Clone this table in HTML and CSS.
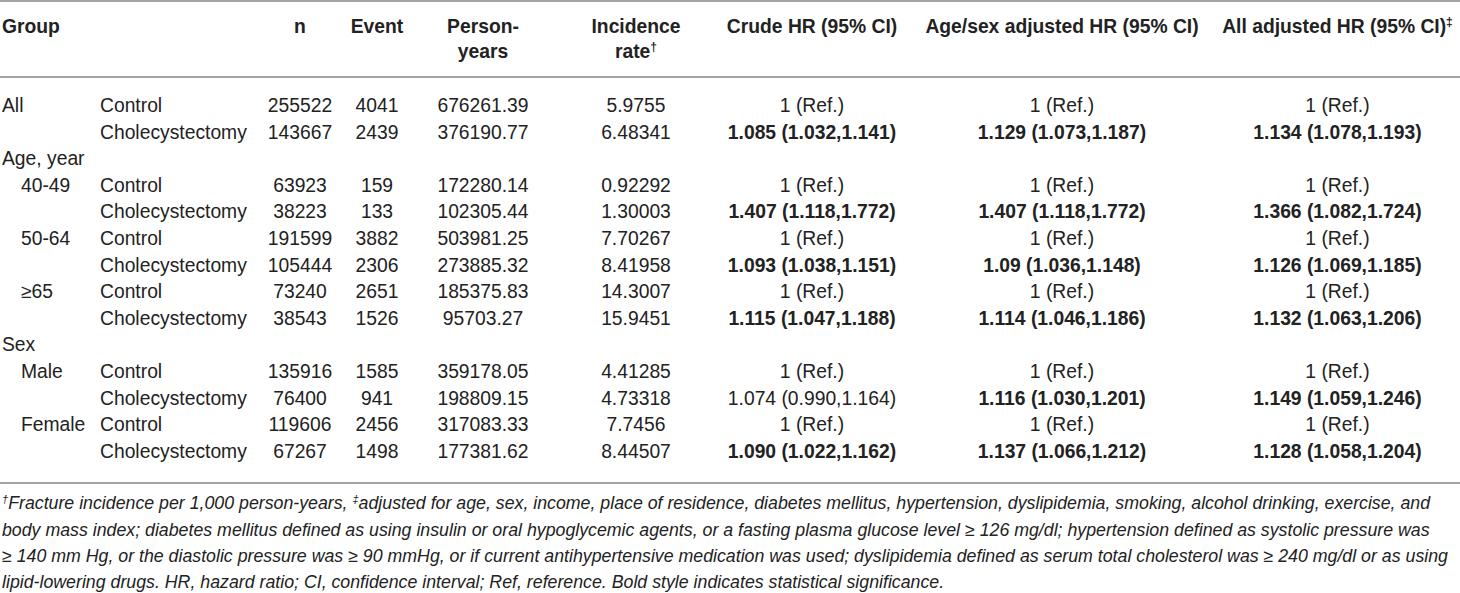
FILE: index.html
```html
<!DOCTYPE html>
<html lang="en">
<head>
    <meta charset="UTF-8">
    <title>Fracture risk after cholecystectomy</title>
    <link rel="stylesheet" href="styles.css">
</head>
<body>
    <table class="hr-table">
        <colgroup>
            <col class="c-group">
            <col class="c-sub">
            <col class="c-n">
            <col class="c-event">
            <col class="c-py">
            <col class="c-inc">
            <col class="c-crude">
            <col class="c-agesex">
            <col class="c-all">
        </colgroup>
        <thead>
            <tr>
                <th class="left">Group</th>
                <th></th>
                <th>n</th>
                <th>Event</th>
                <th>Person-<br>years</th>
                <th>Incidence<br>rate<sup>&dagger;</sup></th>
                <th>Crude HR (95% CI)</th>
                <th>Age/sex adjusted HR (95% CI)</th>
                <th>All adjusted HR (95% CI)<sup>&Dagger;</sup></th>
            </tr>
        </thead>
        <tbody>
            <tr class="first">
                <td class="left">All</td><td class="left">Control</td>
                <td>255522</td><td>4041</td><td>676261.39</td><td>5.9755</td>
                <td>1 (Ref.)</td><td>1 (Ref.)</td><td>1 (Ref.)</td>
            </tr>
            <tr>
                <td></td><td class="left">Cholecystectomy</td>
                <td>143667</td><td>2439</td><td>376190.77</td><td>6.48341</td>
                <td><b>1.085 (1.032,1.141)</b></td><td><b>1.129 (1.073,1.187)</b></td><td><b>1.134 (1.078,1.193)</b></td>
            </tr>
            <tr>
                <td class="left" colspan="2">Age, year</td>
                <td></td><td></td><td></td><td></td><td></td><td></td><td></td>
            </tr>
            <tr>
                <td class="left sub">40-49</td><td class="left">Control</td>
                <td>63923</td><td>159</td><td>172280.14</td><td>0.92292</td>
                <td>1 (Ref.)</td><td>1 (Ref.)</td><td>1 (Ref.)</td>
            </tr>
            <tr>
                <td></td><td class="left">Cholecystectomy</td>
                <td>38223</td><td>133</td><td>102305.44</td><td>1.30003</td>
                <td><b>1.407 (1.118,1.772)</b></td><td><b>1.407 (1.118,1.772)</b></td><td><b>1.366 (1.082,1.724)</b></td>
            </tr>
            <tr>
                <td class="left sub">50-64</td><td class="left">Control</td>
                <td>191599</td><td>3882</td><td>503981.25</td><td>7.70267</td>
                <td>1 (Ref.)</td><td>1 (Ref.)</td><td>1 (Ref.)</td>
            </tr>
            <tr>
                <td></td><td class="left">Cholecystectomy</td>
                <td>105444</td><td>2306</td><td>273885.32</td><td>8.41958</td>
                <td><b>1.093 (1.038,1.151)</b></td><td><b>1.09 (1.036,1.148)</b></td><td><b>1.126 (1.069,1.185)</b></td>
            </tr>
            <tr>
                <td class="left sub">&ge;65</td><td class="left">Control</td>
                <td>73240</td><td>2651</td><td>185375.83</td><td>14.3007</td>
                <td>1 (Ref.)</td><td>1 (Ref.)</td><td>1 (Ref.)</td>
            </tr>
            <tr>
                <td></td><td class="left">Cholecystectomy</td>
                <td>38543</td><td>1526</td><td>95703.27</td><td>15.9451</td>
                <td><b>1.115 (1.047,1.188)</b></td><td><b>1.114 (1.046,1.186)</b></td><td><b>1.132 (1.063,1.206)</b></td>
            </tr>
            <tr>
                <td class="left" colspan="2">Sex</td>
                <td></td><td></td><td></td><td></td><td></td><td></td><td></td>
            </tr>
            <tr>
                <td class="left sub">Male</td><td class="left">Control</td>
                <td>135916</td><td>1585</td><td>359178.05</td><td>4.41285</td>
                <td>1 (Ref.)</td><td>1 (Ref.)</td><td>1 (Ref.)</td>
            </tr>
            <tr>
                <td></td><td class="left">Cholecystectomy</td>
                <td>76400</td><td>941</td><td>198809.15</td><td>4.73318</td>
                <td>1.074 (0.990,1.164)</td><td><b>1.116 (1.030,1.201)</b></td><td><b>1.149 (1.059,1.246)</b></td>
            </tr>
            <tr>
                <td class="left sub">Female</td><td class="left">Control</td>
                <td>119606</td><td>2456</td><td>317083.33</td><td>7.7456</td>
                <td>1 (Ref.)</td><td>1 (Ref.)</td><td>1 (Ref.)</td>
            </tr>
            <tr class="last">
                <td></td><td class="left">Cholecystectomy</td>
                <td>67267</td><td>1498</td><td>177381.62</td><td>8.44507</td>
                <td><b>1.090 (1.022,1.162)</b></td><td><b>1.137 (1.066,1.212)</b></td><td><b>1.128 (1.058,1.204)</b></td>
            </tr>
        </tbody>
    </table>

    <p class="footnote">
        <sup>&dagger;</sup>Fracture incidence per 1,000 person-years, <sup>&Dagger;</sup>adjusted for age, sex, income, place of residence, diabetes mellitus, hypertension, dyslipidemia, smoking, alcohol drinking, exercise, and body mass index; diabetes mellitus defined as using insulin or oral hypoglycemic agents, or a fasting plasma glucose level &ge;&nbsp;126 mg/dl; hypertension defined as systolic pressure was &ge;&nbsp;140 mm Hg, or the diastolic pressure was &ge;&nbsp;90 mmHg, or if current antihypertensive medication was used; dyslipidemia defined as serum total cholesterol was &ge;&nbsp;240 mg/dl or as using lipid-lowering drugs. HR, hazard ratio; CI, confidence interval; Ref, reference. Bold style indicates statistical significance.
    </p>
</body>
</html>
```

FILE: styles.css
```css
/* Page */
body {
    margin: 0;
    background: #ffffff;
    color: #222222;
    font-family: "Liberation Sans", Arial, sans-serif;
}

/* Table */
.hr-table {
    width: 1460px;
    table-layout: fixed;
    border-collapse: separate;
    border-spacing: 0;
    font-size: 19.3px;
}

.c-group { width: 98px; }
.c-sub { width: 157px; }
.c-n { width: 90px; }
.c-event { width: 64px; }
.c-py { width: 148px; }
.c-inc { width: 158px; }
.c-crude { width: 194px; }
.c-agesex { width: 306px; }
.c-all { width: 245px; }

.hr-table th,
.hr-table td {
    padding: 0;
    text-align: center;
    white-space: nowrap;
}

.hr-table th {
    font-weight: bold;
    line-height: 25px;
    vertical-align: top;
    padding-top: 12px;
    padding-bottom: 12px;
    border-top: 2px solid #a3a3a3;
    border-bottom: 2px solid #a3a3a3;
}

.hr-table td {
    line-height: 26.6px;
}

.hr-table .left {
    text-align: left;
    padding-left: 2px;
}

.hr-table td.sub {
    padding-left: 21px;
}

.hr-table tbody tr.first td {
    padding-top: 15px;
}

.hr-table tbody tr.last td {
    padding-bottom: 17px;
    border-bottom: 2px solid #a3a3a3;
}

.hr-table sup {
    font-size: 12px;
    line-height: 0;
}

/* Footnote */
.footnote {
    margin: 0;
    padding: 6px 0 0 2px;
    font-size: 17.75px;
    font-style: italic;
    line-height: 26.3px;
}

.footnote sup {
    font-size: 11px;
    line-height: 0;
    vertical-align: baseline;
    position: relative;
    top: -0.6em;
}
```
